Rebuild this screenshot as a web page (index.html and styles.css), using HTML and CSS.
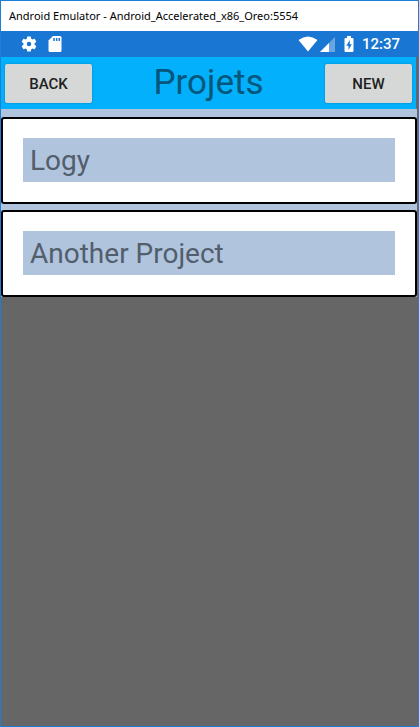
FILE: index.html
```html
<!DOCTYPE html>
<html lang="en">
<head>
<meta charset="utf-8">
<meta name="viewport" content="width=device-width, initial-scale=1">
<title>Projets</title>
<link rel="stylesheet" href="styles.css">
</head>
<body>
<div class="window">
  <div class="window-title">Android Emulator - Android_Accelerated_x86_Oreo:5554</div>
  <div class="status">
    <svg class="gear" width="18" height="18" viewBox="0 0 24 24" aria-hidden="true"><path fill="#fff" d="M19.43 12.98c.04-.32.07-.64.07-.98s-.03-.66-.07-.98l2.11-1.65c.19-.15.24-.42.12-.64l-2-3.46c-.12-.22-.39-.3-.61-.22l-2.49 1c-.52-.4-1.08-.73-1.69-.98l-.38-2.65A.49.49 0 0 0 14 2h-4c-.25 0-.46.18-.49.42l-.38 2.65c-.61.25-1.17.59-1.69.98l-2.49-1c-.23-.09-.49 0-.61.22l-2 3.46c-.13.22-.07.49.12.64l2.11 1.65c-.04.32-.07.65-.07.98s.03.66.07.98l-2.11 1.65c-.19.15-.24.42-.12.64l2 3.46c.12.22.39.3.61.22l2.49-1c.52.4 1.08.73 1.69.98l.38 2.65c.03.24.24.42.49.42h4c.25 0 .46-.18.49-.42l.38-2.65c.61-.25 1.17-.59 1.69-.98l2.49 1c.23.09.49 0 .61-.22l2-3.46c.12-.22.07-.49-.12-.64l-2.11-1.65zM12 15a3 3 0 1 1 0-6 3 3 0 0 1 0 6z"/></svg>
    <svg class="card-icon" width="14" height="16" viewBox="0 0 14 16" aria-hidden="true"><path fill="#fff" d="M5 0h7q1.500 0 1.500 1.500v13q0 1.500-1.500 1.500H2Q.500 16 .500 14.500V4.500z"/><path fill="#1976d2" d="M5.300 2h1.500v3H5.300zM7.900 2h1.500v3H7.900zM10.500 2H12v3h-1.500z"/></svg>
    <span class="spacer"></span>
    <svg class="wifi" width="20" height="16" viewBox="0 0 20 16" aria-hidden="true"><path fill="#fff" d="M.500 4Q10-3 19.500 4L10 15.500z"/></svg>
    <svg class="signal" width="15" height="15" viewBox="0 0 15 15" aria-hidden="true"><path fill="#fff" fill-opacity=".35" d="M15 0v15H0z"/><path fill="#fff" d="M9 6v9H0z"/></svg>
    <svg class="battery" width="10" height="16" viewBox="0 0 10 16" aria-hidden="true"><path fill="#fff" d="M3 0h4v2h1.500Q9.500 2 9.500 3v12q0 1-1 1h-7q-1 0-1-1V3q0-1 1-1H3z"/><path fill="#1976d2" d="M5.800 4L2.300 9.700h2.200V14L7.800 8.300H5.800z"/></svg>
    <span class="clock">12:37</span>
  </div>
  <header class="toolbar">
    <button class="action" type="button">BACK</button>
    <h1 class="heading">Projets</h1>
    <button class="action" type="button">NEW</button>
  </header>
  <main class="projects">
    <div class="project"><div class="name">Logy</div></div>
    <div class="project"><div class="name">Another Project</div></div>
  </main>
</div>
</body>
</html>
```
FILE: styles.css
```css
* {
  box-sizing: border-box;
}

body {
  margin: 0;
  font-family: Roboto, sans-serif;
}

.window {
  min-height: 100vh;
  border: 1px solid #1a7fd6;
  background: #666;
}

.window-title {
  height: 30px;
  padding-left: 8px;
  background: #fff;
  color: #000;
  font: 11px/30px "Noto Sans", sans-serif;
  white-space: nowrap;
}

.status {
  display: flex;
  align-items: center;
  height: 26px;
  padding: 0 18px 0 19px;
  background: #1976d2;
}

.card-icon {
  margin-left: 10px;
}

.spacer {
  flex: 1;
}

.signal {
  margin-left: 2px;
}

.battery {
  margin-left: 9px;
}

.clock {
  margin-left: 8px;
  color: #fff;
  font-size: 15px;
  font-weight: 500;
  line-height: 28px;
}

.toolbar {
  display: flex;
  align-items: center;
  justify-content: space-between;
  height: 52px;
  margin-right: 2px;
  padding: 0 4px;
  background: #03b0fb;
}

.action {
  width: 87px;
  height: 39px;
  padding: 0;
  border: 0;
  border-radius: 2px;
  background: #d6d8d7;
  box-shadow: 0 0 2px rgba(0, 0, 0, 0.3);
  color: #212121;
  font: 500 15px/41px Roboto, sans-serif;
}

.heading {
  margin: 0;
  color: #04567a;
  font-size: 35px;
  font-weight: 400;
  line-height: 52px;
}

.projects {
  display: grid;
  gap: 6px;
  margin-right: 1px;
  padding-top: 8px;
  background: #b0c4de;
}

.project {
  padding: 19px 20px 20px;
  border: 2px solid #000;
  border-radius: 3px;
  background: #fff;
}

.name {
  height: 44px;
  padding-left: 7px;
  background: #b0c4de;
  color: #535e6c;
  font-size: 28px;
  line-height: 46px;
}
```
